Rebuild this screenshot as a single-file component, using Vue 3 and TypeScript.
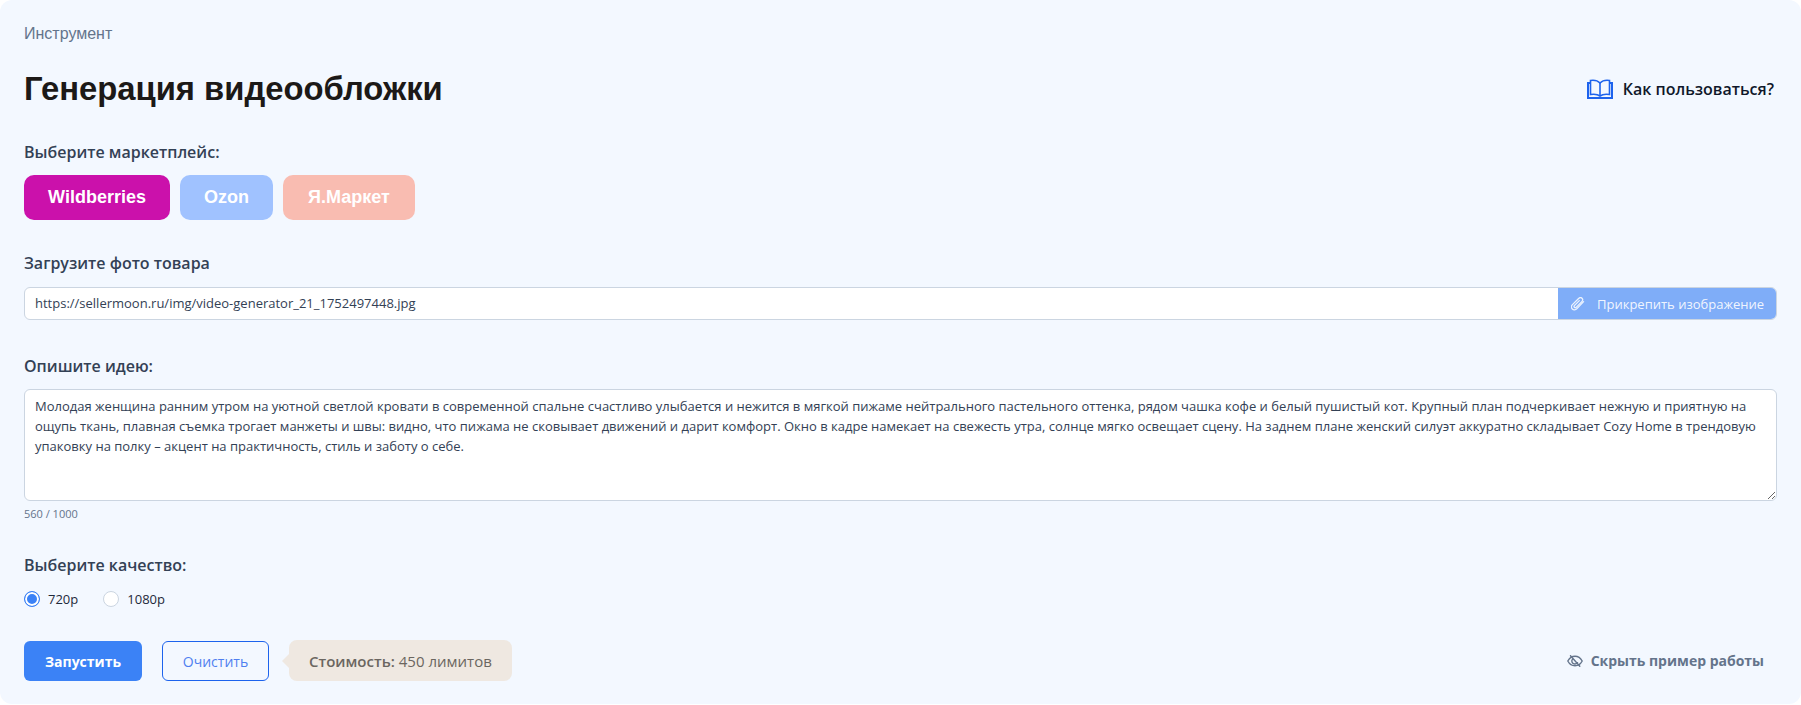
<script setup lang="ts">
const prompt =
  "Молодая женщина ранним утром на уютной светлой кровати в современной спальне счастливо улыбается и нежится в мягкой пижаме нейтрального пастельного оттенка, рядом чашка кофе и белый пушистый кот. Крупный план подчеркивает нежную и приятную на ощупь ткань, плавная съемка трогает манжеты и швы: видно, что пижама не сковывает движений и дарит комфорт. Окно в кадре намекает на свежесть утра, солнце мягко освещает сцену. На заднем плане женский силуэт аккуратно складывает Cozy Home в трендовую упаковку на полку – акцент на практичность, стиль и заботу о себе.";
</script>

<template>
  <main class="card">
    <div class="crumb">Инструмент</div>
    <header class="head">
      <h1>Генерация видеообложки</h1>
      <a class="help">
        <svg width="26" height="20" viewBox="0 0 26 20" fill="none" stroke="#1d63ed" stroke-width="1.6">
          <path d="M13 4C11 2 7 1 3.500 1.500V15.500C7 15 11 15.500 13 17C15 15.500 19 15 22.500 15.500V1.500C19 1 15 2 13 4Z" />
          <path d="M13 4V17" />
          <path d="M3.500 4H1V19H25V4H22.500" stroke-width="2" />
        </svg>
        <span>Как пользоваться?</span>
      </a>
    </header>

    <div class="label l1">Выберите маркетплейс:</div>
    <div class="markets">
      <button class="mk wb">Wildberries</button>
      <button class="mk oz">Ozon</button>
      <button class="mk ym">Я.Маркет</button>
    </div>

    <div class="label l2">Загрузите фото товара</div>
    <div class="upload">
      <div class="url">https://sellermoon.ru/img/video-generator_21_1752497448.jpg</div>
      <button class="attach">
        <svg class="clip" width="14" height="14" viewBox="0 0 14 14" fill="none" stroke="#fff" stroke-width="1.300" stroke-linecap="round" stroke-linejoin="round" opacity=".85">
          <path d="M12.600 4.600L6 11.600C4.600 13.100 2.500 13.200 1.300 12C.1 10.800.3 8.800 1.700 7.400L7.600 1.500C8.600.5 10.100.4 11 1.300C11.900 2.200 11.800 3.600 10.800 4.600L5.400 10.100C4.800 10.700 3.900 10.800 3.400 10.300C2.900 9.800 3 9 3.600 8.400L8.300 3.600" />
        </svg>
        <span>Прикрепить изображение</span>
      </button>
    </div>

    <div class="label l3">Опишите идею:</div>
    <textarea class="idea" :value="prompt"></textarea>
    <div class="count">560 / 1000</div>

    <div class="label l4">Выберите качество:</div>
    <div class="radios">
      <label class="radio"><span class="dot on"></span>720p</label>
      <label class="radio"><span class="dot"></span>1080p</label>
    </div>

    <footer class="foot">
      <button class="run">Запустить</button>
      <button class="clear">Очистить</button>
      <div class="cost"><b>Стоимость:</b><span>450 лимитов</span></div>
      <a class="hide">
        <svg width="16" height="12" viewBox="0 0 16 12" fill="none" stroke="#64748b" stroke-width="1.400" stroke-linecap="round" stroke-linejoin="round">
          <path d="M.8 6C2.500 2.800 5 1.200 8 1.200S13.500 2.800 15.200 6C13.500 9.200 11 10.800 8 10.800S2.500 9.200.8 6Z" />
          <path d="M5.500 4.100A3 3 0 0 0 8 9C9.100 9 10 8.500 10.500 7.700" />
          <path d="M3.500 .7L12.800 11.300" />
        </svg>
        <span>Скрыть пример работы</span>
      </a>
    </footer>
  </main>
</template>

<style scoped>
.card {
  box-sizing: border-box;
  height: 704px;
  padding: 24px 24px 0;
  background: #f3f8ff;
  border-radius: 12px;
  font-family: "Open Sans", sans-serif;
  color: #334155;
}
.crumb {
  font-family: "Liberation Sans", sans-serif;
  font-size: 16px;
  line-height: 20px;
  color: #64748b;
}
.head {
  display: flex;
  align-items: center;
  justify-content: space-between;
  margin-top: 25px;
  height: 40px;
}
h1 {
  margin: 0;
  font-family: "Liberation Sans", sans-serif;
  font-size: 32.800px;
  line-height: 40px;
  font-weight: 700;
  color: #1c1917;
}
.help {
  display: flex;
  align-items: center;
  gap: 10px;
  margin-right: 3px;
  font-size: 16px;
  font-weight: 600;
  color: #0f172a;
}
.help svg { display: block; }
.label {
  font-size: 16px;
  line-height: 24px;
  font-weight: 600;
  color: #334155;
}
.l1 { margin-top: 31px; }
.markets {
  display: flex;
  gap: 10px;
  margin-top: 11px;
}
.mk {
  height: 45px;
  border: 0;
  border-radius: 10px;
  font-family: "Liberation Sans", sans-serif;
  font-size: 18px;
  font-weight: 700;
  color: #fff;
  padding: 0;
}
.wb { width: 146px; background: #cb11ab; }
.oz { width: 93px; background: #a0c2ff; }
.ym { width: 132px; background: #f9bcb1; }
.l2 { margin-top: 31px; }
.upload {
  display: flex;
  height: 33px;
  margin-top: 12px;
  box-sizing: border-box;
  border: 1px solid #cbd5e1;
  border-radius: 6px;
  background: #fff;
  overflow: hidden;
}
.url {
  flex: 1;
  padding-left: 10px;
  font-size: 13px;
  line-height: 31px;
  color: #334155;
}
.attach {
  flex: none;
  display: flex;
  align-items: center;
  gap: 12px;
  box-sizing: border-box;
  width: 218px;
  padding: 0 13px;
  border: 0;
  background: #7fadf8;
  color: rgba(255, 255, 255, .9);
  font-family: inherit;
  font-size: 13px;
  font-weight: 500;
  white-space: nowrap;
}
.clip { flex: none; }
.l3 { margin-top: 34px; }
.idea {
  display: block;
  box-sizing: border-box;
  width: 100%;
  height: 112px;
  margin-top: 11px;
  padding: 6px 10px;
  border: 1px solid #cbd5e1;
  border-radius: 6px;
  background: #fff;
  font-family: "Open Sans", sans-serif;
  font-size: 13px;
  line-height: 20px;
  color: #334155;
  outline: none;
}
.count {
  margin-top: 6px;
  font-size: 11px;
  line-height: 14px;
  color: #64748b;
}
.l4 { margin-top: 32px; }
.radios {
  display: flex;
  gap: 25px;
  margin-top: 13px;
}
.radio {
  display: flex;
  align-items: center;
  gap: 8px;
  font-size: 13px;
  line-height: 18px;
  color: #1e293b;
}
.dot {
  box-sizing: border-box;
  width: 16px;
  height: 16px;
  border: 1px solid #cbd5e1;
  border-radius: 50%;
  background: #fff;
}
.dot.on {
  border: 1px solid #3b82f6;
  background: #3b82f6;
  box-shadow: inset 0 0 0 2px #fff;
}
.foot {
  display: flex;
  align-items: flex-end;
  height: 41px;
  margin-top: 32px;
}
.run {
  width: 118px;
  height: 40px;
  border: 0;
  border-radius: 6px;
  background: #3b82f6;
  color: #fff;
  font-family: inherit;
  font-size: 14px;
  font-weight: 700;
}
.clear {
  box-sizing: border-box;
  width: 107px;
  height: 40px;
  margin-left: 20px;
  border: 1px solid #1d63ed;
  border-radius: 6px;
  background: transparent;
  color: #4f7ff0;
  font-family: inherit;
  font-size: 14px;
}
.cost {
  position: relative;
  display: flex;
  align-items: center;
  gap: 4px;
  height: 41px;
  margin-left: 20px;
  padding: 0 20px;
  background: #efe8e1;
  border-radius: 8px;
  font-size: 15px;
  color: #6b6660;
}
.cost::before {
  content: "";
  position: absolute;
  left: -7px;
  top: 50%;
  margin-top: -7px;
  border: 7px solid transparent;
  border-left: 0;
  border-right-color: #efe8e1;
}
.cost b { font-weight: 600; }
.hide {
  display: flex;
  align-items: center;
  align-self: center;
  gap: 8px;
  margin-left: auto;
  margin-right: 13px;
  font-size: 14px;
  font-weight: 700;
  color: #64748b;
}
</style>

<style>
html, body { background: #fff; }
</style>
